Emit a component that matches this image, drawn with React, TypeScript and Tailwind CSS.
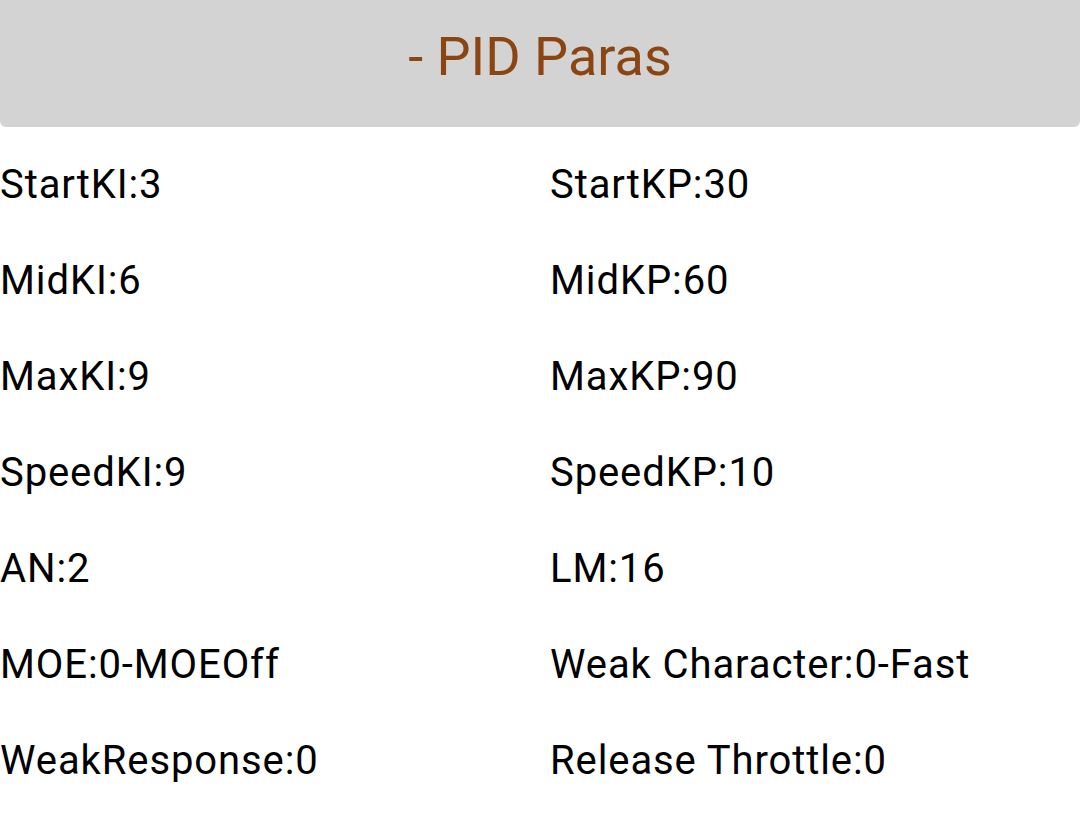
const rows: [string, string][] = [
  ["StartKI:3", "StartKP:30"],
  ["MidKI:6", "MidKP:60"],
  ["MaxKI:9", "MaxKP:90"],
  ["SpeedKI:9", "SpeedKP:10"],
  ["AN:2", "LM:16"],
  ["MOE:0-MOEOff", "Weak Character:0-Fast"],
  ["WeakResponse:0", "Release Throttle:0"],
];

export default function App() {
  return (
    <main className="min-h-[816px] w-[1080px] bg-white font-['Roboto',sans-serif]">
      <header className="flex h-[127px] items-center justify-center rounded-b-[6px] bg-[#d3d3d3] pb-[14px]">
        <h1 className="text-[54px] leading-none text-[#8b4513]">- PID Paras</h1>
      </header>
      <section className="grid grid-cols-[550px_1fr] pt-[10px]">
        {rows.map(([left, right]) => (
          <div key={left} className="contents">
            <div className="flex h-[96px] items-center text-[40px] leading-none tracking-[0.9px] text-black">
              {left}
            </div>
            <div className="flex h-[96px] items-center text-[40px] leading-none tracking-[0.9px] text-black">
              {right}
            </div>
          </div>
        ))}
      </section>
    </main>
  );
}
